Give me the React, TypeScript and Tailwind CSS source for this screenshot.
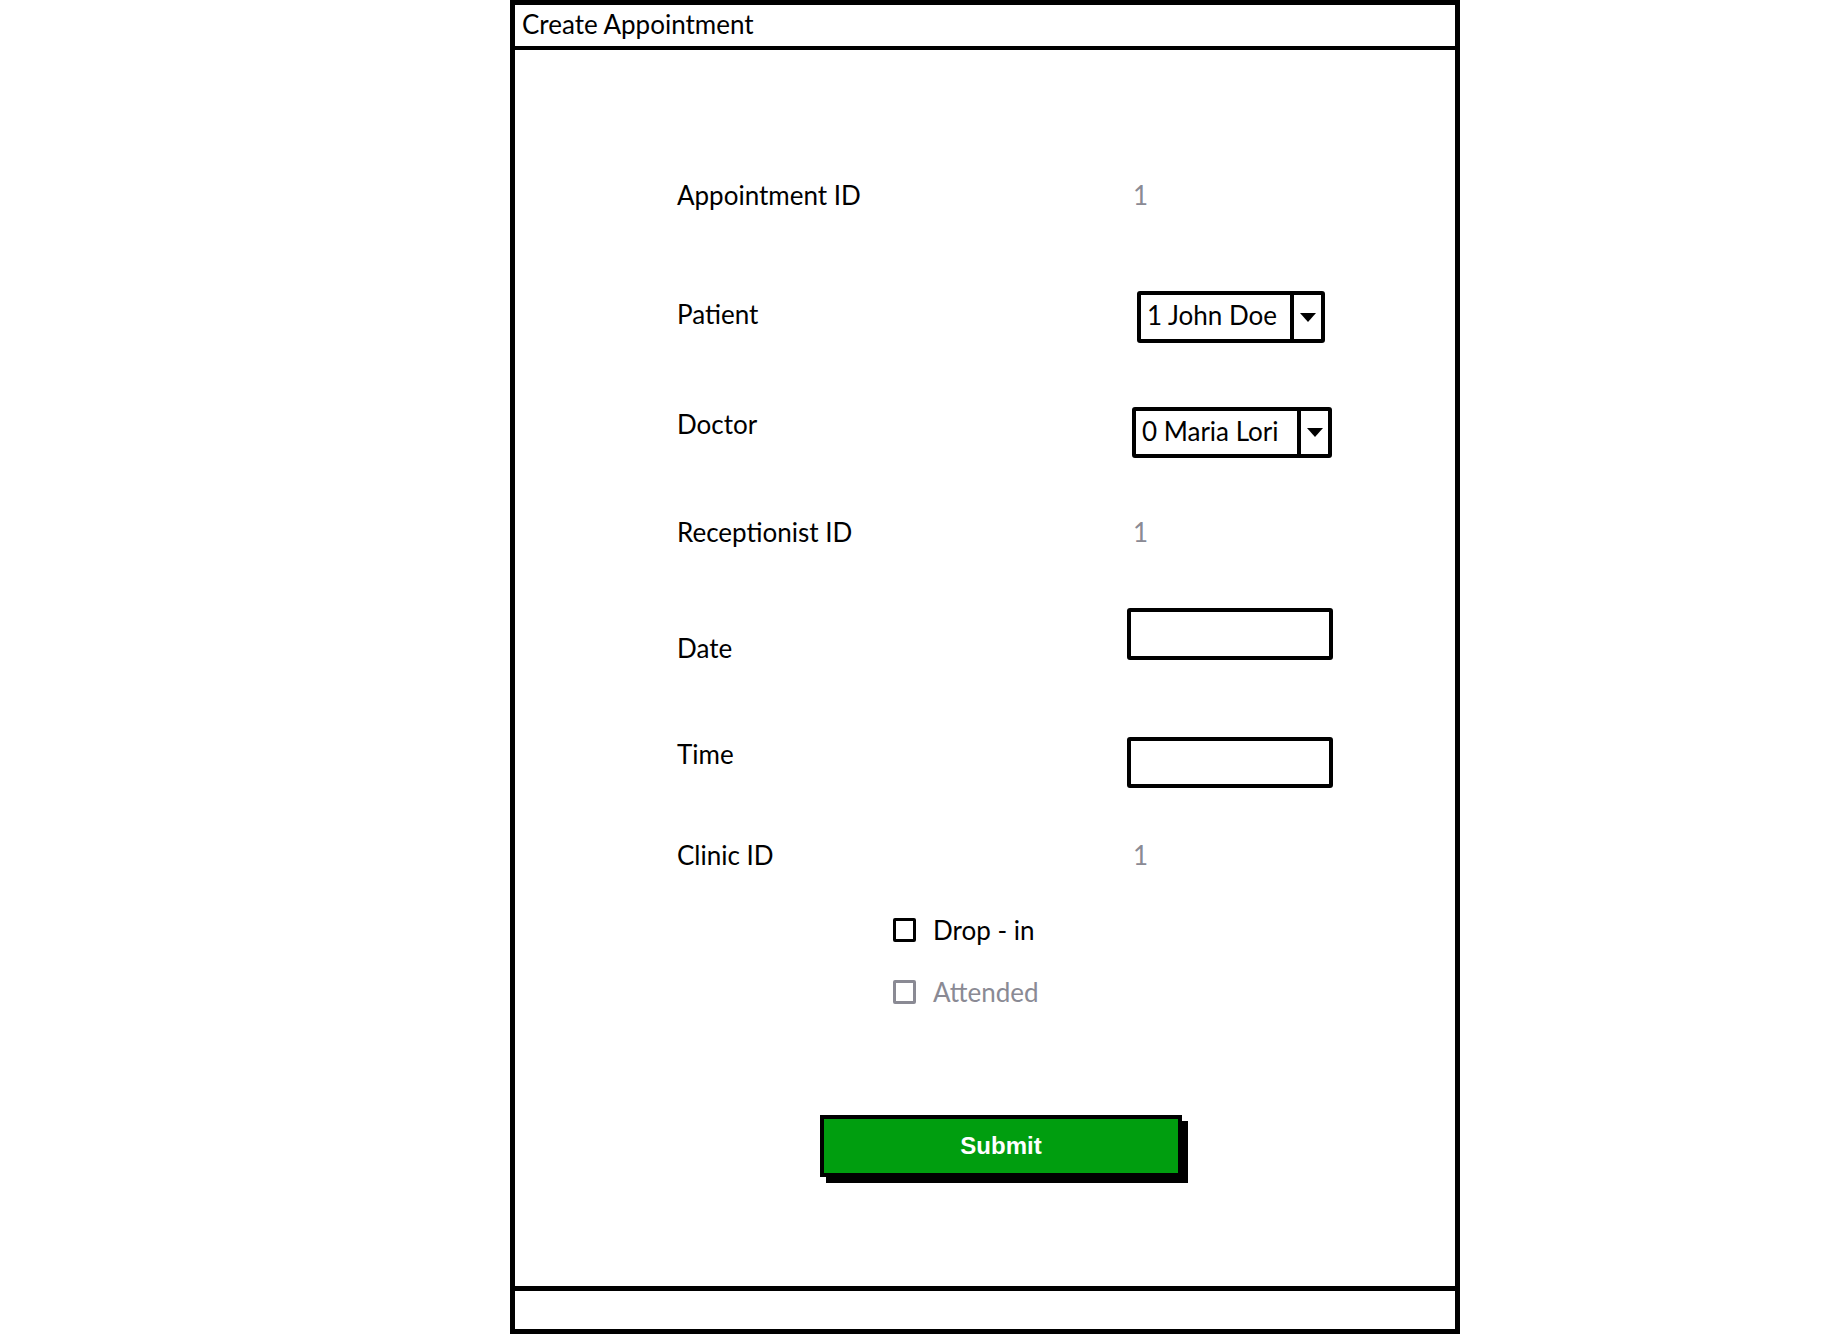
import React from 'react';

const sketchFont = { fontFamily: 'Lato, "Noto Sans", sans-serif' };

const Caret: React.FC = () => (
	<svg width="18" height="11" viewBox="0 0 18 11">
		<path d="M1 1 L17 1 L9 10 Z" fill="#000" />
	</svg>
);

const Select: React.FC<{ value: string; width: string; height: string }> = ({ value, width, height }) => (
	<div className={`flex border-[4px] border-black rounded-[3px] bg-white ${width} ${height}`}>
		<div className="flex-1 flex items-center pl-[6px] pb-[4px] text-[26px] text-black whitespace-nowrap">{value}</div>
		<div className="w-[31px] flex items-center justify-center border-l-[4px] border-black">
			<Caret />
		</div>
	</div>
);

const App: React.FC = () => {
	return (
		<div className="w-[1838px] h-[1336px] bg-white" style={sketchFont}>
			<div className="ml-[510px] w-[950px] h-[1334px] border-[5px] border-black flex flex-col">
				{/* title bar */}
				<div className="h-[45px] border-b-[4px] border-black flex items-center px-[7px] pb-[2px] text-[26px] text-black">
					Create Appointment
				</div>

				{/* form */}
				<div className="flex-1 pl-[162px] text-[26px] text-black leading-[30px]">
					<div className="mt-[130px] flex h-[30px]">
						<div className="w-[456px]">Appointment ID</div>
						<div className="text-[#8a8a94]">1</div>
					</div>

					<div className="mt-[81px] flex items-start">
						<div className="w-[460px] mt-[8px]">Patient</div>
						<Select value="1 John Doe" width="w-[188px]" height="h-[52px]" />
					</div>

					<div className="mt-[64px] flex items-start">
						<div className="w-[455px] mt-[2px]">Doctor</div>
						<Select value="0 Maria Lori" width="w-[200px]" height="h-[51px]" />
					</div>

					<div className="mt-[59px] flex h-[30px]">
						<div className="w-[456px]">Receptionist ID</div>
						<div className="text-[#8a8a94]">1</div>
					</div>

					<div className="mt-[61px] flex items-start">
						<div className="w-[450px] mt-[25px]">Date</div>
						<div className="w-[206px] h-[52px] border-[4px] border-black rounded-[3px]"></div>
					</div>

					<div className="mt-[74px] flex items-start">
						<div className="w-[450px] mt-[2px]">Time</div>
						<div className="w-[206px] h-[51px] border-[4px] border-black rounded-[3px]"></div>
					</div>

					<div className="mt-[52px] flex h-[30px]">
						<div className="w-[456px]">Clinic ID</div>
						<div className="text-[#8a8a94]">1</div>
					</div>

					{/* checkboxes */}
					<div className="mt-[45px] flex items-center h-[30px] pl-[216px]">
						<div className="w-[23px] h-[24px] border-[3px] border-black rounded-[2px]"></div>
						<span className="ml-[17px]">Drop - in</span>
					</div>
					<div className="mt-[32px] flex items-center h-[30px] pl-[216px] text-[#8a8a94]">
						<div className="w-[23px] h-[24px] border-[3px] border-[#8a8a94] rounded-[2px]"></div>
						<span className="ml-[17px]">Attended</span>
					</div>

					{/* submit */}
					<div className="mt-[108px] pl-[143px]">
						<button
							className="w-[362px] h-[62px] bg-[#009e0f] border-[4px] border-black shadow-[6px_6px_0_#000] text-white text-[24px] font-bold"
							style={{ fontFamily: '"Liberation Sans", Arial, sans-serif' }}
						>
							Submit
						</button>
					</div>
				</div>

				{/* footer bar */}
				<div className="h-[43px] border-t-[5px] border-black"></div>
			</div>
		</div>
	);
};

export default App;
